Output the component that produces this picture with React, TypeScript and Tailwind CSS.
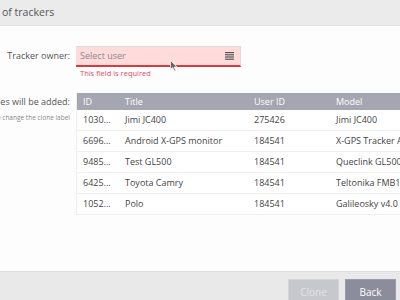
const rows = [
  { id: "1030...", title: "Jimi JC400", userId: "275426", model: "Jimi JC400" },
  { id: "6696...", title: "Android X-GPS monitor", userId: "184541", model: "X-GPS Tracker Android" },
  { id: "9485...", title: "Test GL500", userId: "184541", model: "Queclink GL500" },
  { id: "6425...", title: "Toyota Camry", userId: "184541", model: "Teltonika FMB120" },
  { id: "1052...", title: "Polo", userId: "184541", model: "Galileosky v4.0" },
];

const ListIcon = () => (
  <svg width="9" height="8" viewBox="0 0 9 8" className="shrink-0">
    <rect x="0" y="0" width="9" height="1.2" fill="#555" />
    <rect x="0" y="2.2" width="9" height="1.2" fill="#555" />
    <rect x="0" y="4.4" width="9" height="1.2" fill="#555" />
    <rect x="0" y="6.6" width="9" height="1.2" fill="#555" />
  </svg>
);

const Cursor = () => (
  <svg
    width="8"
    height="12"
    viewBox="0 0 8 12"
    className="absolute left-[170px] top-[60px]"
  >
    <path d="M0.5 0.5 L0.5 9.5 L2.7 7.5 L4.3 11 L5.6 10.4 L4.1 7 L7 7 Z" fill="#666" stroke="#eee" strokeWidth="0.8" />
  </svg>
);

export default function App() {
  return (
    <div
      className="relative w-[400px] h-[300px] overflow-hidden flex flex-col bg-[#fdfdfd]"
      style={{ fontFamily: '"Open Sans", "Noto Sans", sans-serif' }}
    >
      <div className="h-[26px] shrink-0 bg-[#ebebeb] border-b border-[#e2e2e2] flex items-center pl-[2px]">
        <span className="text-[10.5px] text-[#555]">of trackers</span>
      </div>

      <div className="flex-1 flex flex-col pt-[20px]">
        <div className="flex">
          <div className="w-[70px] h-[20px] flex items-center justify-end">
            <span className="text-[9px] text-[#555] whitespace-nowrap">Tracker owner:</span>
          </div>
          <div className="ml-[6px] flex flex-col">
            <div className="w-[165px] h-[21px] bg-[#ffdbdc] border-t border-r border-[#dcdcdc] border-b-2 border-b-[#d93a3e] flex items-center justify-between pl-[4px] pr-[6px]">
              <span className="text-[9px] text-[#888]">Select user</span>
              <ListIcon />
            </div>
            <span className="mt-[1px] pl-[4px] text-[7.5px] text-[#e64b5d] leading-[10px]">
              This field is required
            </span>
          </div>
        </div>

        <div className="flex mt-[15px]">
          <div className="w-[70px] flex flex-col items-end">
            <div className="h-[17px] w-[70px] flex items-center justify-end">
              <span className="text-[9px] text-[#555] whitespace-nowrap">Clones will be added:</span>
            </div>
            <div className="w-[70px] flex justify-end mt-[3px]">
              <span className="text-[6.5px] text-[#888] whitespace-nowrap">
                Double click to change the clone label
              </span>
            </div>
          </div>
          <div className="ml-[6px] w-[360px] shrink-0 border-l border-[#eeeeee]">
            <div className="flex h-[17px] items-center bg-[#a4a6b1] text-[9px] text-white">
              <div className="w-[41px] pl-[6px]">ID</div>
              <div className="w-[129px] pl-[7px]">Title</div>
              <div className="w-[82px] pl-[7px]">User ID</div>
              <div className="w-[100px] pl-[7px]">Model</div>
            </div>
            {rows.map((r) => (
              <div
                key={r.id}
                className="flex h-[21px] items-center border-b border-[#efefef] text-[9px] text-[#444] bg-white whitespace-nowrap"
              >
                <div className="w-[41px] pl-[6px]">{r.id}</div>
                <div className="w-[129px] pl-[7px]">{r.title}</div>
                <div className="w-[82px] pl-[7px]">{r.userId}</div>
                <div className="w-[100px] pl-[7px] overflow-hidden">{r.model}</div>
              </div>
            ))}
          </div>
        </div>
      </div>

      <div className="h-[29px] shrink-0 bg-[#e9e9e9] border-t border-[#e0e0e0] flex items-start justify-end gap-[6px] pr-[4px] pt-[7px]">
        <button className="w-[51px] h-[26px] bg-[#c7c8cd] border border-[#d3d4d8] text-[10px] text-[#e2e3e6]">
          Clone
        </button>
        <button className="w-[51px] h-[26px] bg-[#8c8d9c] border border-[#9a9baa] text-[10px] text-white">
          Back
        </button>
      </div>

      <Cursor />
    </div>
  );
}
